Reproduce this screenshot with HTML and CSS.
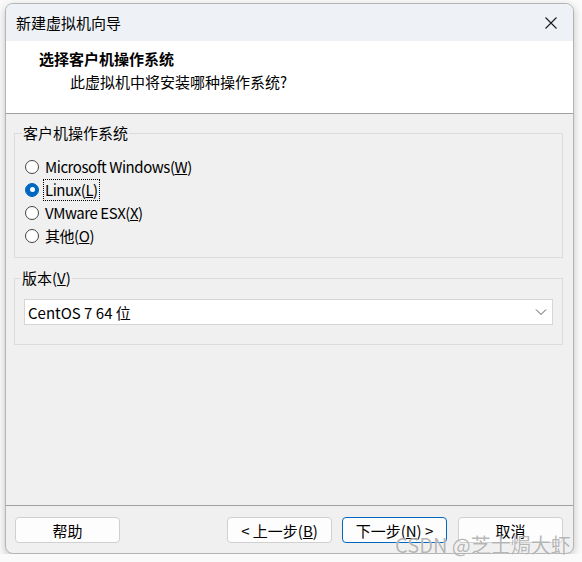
FILE: index.html
```html
<!DOCTYPE html>
<html lang="zh-CN">

<head>
    <meta charset="UTF-8">
    <meta name="viewport" content="width=device-width, initial-scale=1.0">
    <title>新建虚拟机向导</title>
    <link rel="stylesheet" href="styles.css">
</head>

<body>

    <div class="window">
        <div class="titlebar">
            <span class="title">新建虚拟机向导</span>
            <span class="close">
                <svg width="14" height="14" viewBox="0 0 14 14">
                    <path d="M1.5 1.5 L12.5 12.5 M12.5 1.5 L1.5 12.5" stroke="#1a1a1a" stroke-width="1.1" fill="none"/>
                </svg>
            </span>
        </div>

        <div class="header">
            <div class="header-title">选择客户机操作系统</div>
            <div class="header-sub">此虚拟机中将安装哪种操作系统?</div>
        </div>

        <div class="content">
            <fieldset class="group group-os">
                <legend>客户机操作系统</legend>
                <label class="radio-row">
                    <span class="radio"></span>
                    <span class="radio-text">Microsoft Windows(<u>W</u>)</span>
                </label>
                <label class="radio-row">
                    <span class="radio checked"></span>
                    <span class="radio-text focused">Linux(<u>L</u>)</span>
                </label>
                <label class="radio-row">
                    <span class="radio"></span>
                    <span class="radio-text">VMware ESX(<u>X</u>)</span>
                </label>
                <label class="radio-row">
                    <span class="radio"></span>
                    <span class="radio-text">其他(<u>O</u>)</span>
                </label>
            </fieldset>

            <fieldset class="group group-version">
                <legend>版本(<u>V</u>)</legend>
                <div class="select">
                    <span>CentOS 7 64 位</span>
                    <svg width="12" height="8" viewBox="0 0 12 8">
                        <path d="M1 1.5 L6 6.5 L11 1.5" stroke="#555" stroke-width="1" fill="none"/>
                    </svg>
                </div>
            </fieldset>
        </div>

        <div class="footer">
            <button class="btn">帮助</button>
            <div class="spacer"></div>
            <button class="btn">&lt; 上一步(<u>B</u>)</button>
            <button class="btn btn-default">下一步(<u>N</u>) &gt;</button>
            <button class="btn">取消</button>
        </div>
    </div>

    <div class="watermark">CSDN @芝士焗大虾</div>

</body>

</html>
```

FILE: styles.css
```css
body {
    margin: 0;
    background: #fafafa;
    font-family: "Noto Sans CJK SC", "Noto Sans", sans-serif;
    font-size: 15px;
    color: #000;
}

.window {
    position: relative;
    margin: 3px 0 0 5px;
    width: 569px;
    height: 551px;
    box-sizing: border-box;
    border: 1px solid #b4b4b4;
    border-radius: 8px;
    overflow: hidden;
    background: #f0f0f0;
    display: flex;
    flex-direction: column;
    box-shadow: 0 3px 8px rgba(0, 0, 0, 0.22);
}

.titlebar {
    height: 37px;
    background: #eef2f6;
    display: flex;
    align-items: center;
    padding: 0 8px 0 10px;
}

.title {
    flex: 1;
    line-height: 20px;
    padding-top: 1px;
}

.close {
    width: 14px;
    height: 14px;
    margin-right: 7px;
    display: flex;
}

.header {
    height: 64px;
    background: #fff;
    border-bottom: 1px solid #a0a0a0;
    padding: 8px 0 0 33px;
}

.header-title {
    font-weight: bold;
    line-height: 20px;
}

.header-sub {
    line-height: 20px;
    margin: 3px 0 0 31px;
}

.content {
    flex: 1;
    padding: 9px 10px 0 8px;
}

.group {
    margin: 0;
    border: 1px solid #dcdcdc;
    padding: 12px 0 10px 10px;
}

.group legend {
    line-height: 20px;
    padding: 0 1px;
    margin-left: -3px;
}

.group-version {
    margin-top: 10px;
    padding: 11px 9px 19px 9px;
}

.radio-row {
    display: flex;
    align-items: center;
    height: 23px;
}

.radio {
    width: 12px;
    height: 12px;
    border: 1px solid #444;
    border-radius: 50%;
    background: #fff;
    margin-right: 5px;
    position: relative;
}

.radio.checked {
    border-color: #0067c0;
    background: #0067c0;
}

.radio.checked::after {
    content: "";
    position: absolute;
    left: 3.5px;
    top: 3.5px;
    width: 5px;
    height: 5px;
    border-radius: 50%;
    background: #fff;
}

.radio-text {
    line-height: 20px;
    padding: 0 1px;
    letter-spacing: -0.45px;
}

.radio-text.focused {
    outline: 1px dotted #000;
}

.select {
    height: 26px;
    box-sizing: border-box;
    background: #fff;
    border: 1px solid #d6d6d6;
    display: flex;
    align-items: center;
    justify-content: space-between;
    padding: 0 5px 0 3px;
}

.footer {
    border-top: 1px solid #a0a0a0;
    padding: 11px 10px 10px 9px;
    display: flex;
    gap: 10px;
}

.spacer {
    flex: 1;
}

.btn {
    width: 105px;
    height: 26px;
    font-family: inherit;
    font-size: 15px;
    background: #fdfdfd;
    border: 1px solid #d0d0d0;
    border-radius: 4px;
    padding: 0;
    color: #000;
}

.btn-default {
    border-color: #0067c0;
    margin-right: 1px;
}

.watermark {
    position: absolute;
    left: 395px;
    top: 530px;
    font-size: 20px;
    color: rgba(120, 120, 120, 0.55);
    text-shadow: 0 0 1px #fff;
    white-space: nowrap;
}
```
